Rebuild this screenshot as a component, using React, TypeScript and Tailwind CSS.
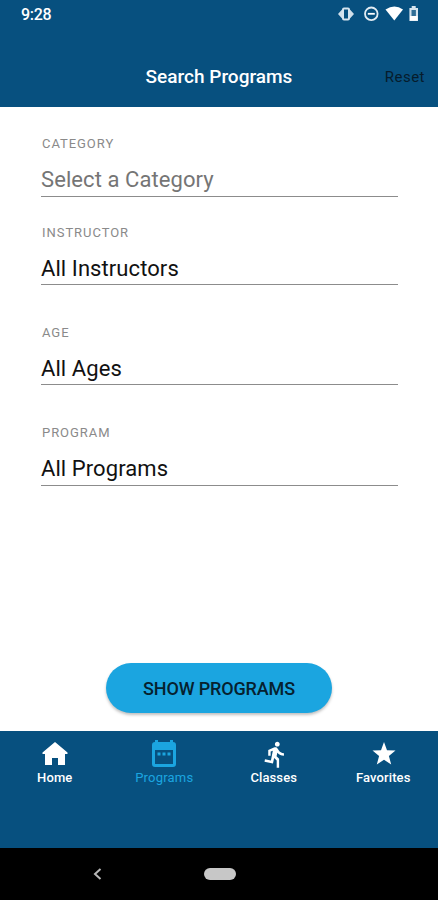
import type { ReactNode } from "react";
import { MdDirectionsRun } from "react-icons/md";

type FieldProps = { label: string; value: string; muted?: boolean; className: string };

function Field({ label, value, muted, className }: FieldProps) {
  return (
    <div className={`flex flex-col border-b border-[#8c8c8c] ${className}`}>
      <span className="pl-px text-[13px] leading-4 tracking-[0.95px] text-[#8a8a8a]">{label}</span>
      <span
        className={`mt-3 text-[22px] leading-8 tracking-[0.08px] whitespace-nowrap ${muted ? "text-[#757575]" : "text-[#111111]"}`}
      >
        {value}
      </span>
    </div>
  );
}

function Tab({ label, active, children }: { label: string; active?: boolean; children: ReactNode }) {
  return (
    <div className={`flex flex-1 flex-col items-center pt-[7px] ${active ? "text-[#1ba5e0]" : "text-white"}`}>
      <div className="flex h-8 items-center justify-center">{children}</div>
      <span className={`text-[13px] leading-4 ${active ? "tracking-[0.2px]" : "font-medium tracking-[0.1px]"}`}>
        {label}
      </span>
    </div>
  );
}

export default function App() {
  return (
    <div className="flex h-[900px] w-[438px] flex-col overflow-hidden bg-white font-[Roboto,sans-serif]">
      <header className="flex h-[107px] flex-col bg-[#07507f]">
        <div className="flex h-[30px] shrink-0 items-center justify-between pr-[18px] pl-[21px] text-white">
          <span className="text-[16px] leading-5 font-medium tracking-[-0.3px]">9:28</span>
          <svg className="mb-[2px]" width="82" height="18" viewBox="338 5 82 18" fill="none">
            <path d="M342.500 9 338 14l4.500 5zM349.500 9 354 14l-4.500 5z" fill="#d0dfea" />
            <rect x="343" y="8.500" width="6" height="11" rx="1" stroke="#d6e4ee" strokeWidth="2" />
            <circle cx="371.300" cy="13.800" r="6.300" stroke="#e2ecf3" strokeWidth="1.800" />
            <path d="M367.800 13.800h7" stroke="#fff" strokeWidth="1.800" />
            <path d="M385.500 9.500q9-6 17.500 0L394.300 20.500z" fill="#fff" />
            <path d="M411.700 6h4v2h2.300v13h-8.600V8h2.300z" fill="#d6e4ee" />
            <path d="M411.500 10h4.400v6h-4.400z" fill="#326f96" />
            <path d="M410 16h7.500v4.500H410z" fill="#fff" />
          </svg>
        </div>
        <div className="grid grow grid-cols-[1fr_auto_1fr] items-center px-[13px] pt-[17px] text-white">
          <span />
          <h1 className="text-[19px] leading-6 font-medium">Search Programs</h1>
          <span className="text-right text-[15px] leading-5 tracking-[0.5px] text-[#061c2c]">Reset</span>
        </div>
      </header>

      <main className="flex flex-1 flex-col pt-[29px] pr-10 pl-[41px]">
        <Field label="CATEGORY" value="Select a Category" muted className="h-[61px]" />
        <Field label="INSTRUCTOR" value="All Instructors" className="mt-7 h-[60px]" />
        <Field label="AGE" value="All Ages" className="mt-10 h-[60px]" />
        <Field label="PROGRAM" value="All Programs" className="mt-10 h-[61px]" />
        <button className="mt-[177px] mr-px h-[50px] w-[226px] self-center rounded-full bg-[#1ba5e0] text-[18px] font-medium tracking-[-0.15px] text-[#06212f] shadow-[0_2px_3px_rgba(0,0,0,0.25)]">
          SHOW PROGRAMS
        </button>
      </main>

      <nav className="flex h-[117px] bg-[#07507f]">
        <Tab label="Home">
          <svg width="26" height="24" viewBox="0 0 26 24" fill="currentColor">
            <path d="M13 0 .5 10.500V12H3v11h7v-7h6v7h7V12h2.500v-1.500z" />
          </svg>
        </Tab>
        <Tab label="Programs" active>
          <svg width="26" height="28" viewBox="0 0 26 28" fill="currentColor">
            <path
              fillRule="evenodd"
              d="M4 0h3v2h12V0h3v2a3 3 0 0 1 3 3v19a3 3 0 0 1-3 3H4a3 3 0 0 1-3-3V5a3 3 0 0 1 3-3zM4 10v14h18V10zM6.500 12.500h3v3h-3zM11.500 12.500h3v3h-3zM16.500 12.500h3v3h-3z"
            />
          </svg>
        </Tab>
        <Tab label="Classes">
          <MdDirectionsRun size={29} className="ml-[3px]" />
        </Tab>
        <Tab label="Favorites">
          <svg className="ml-px" width="24" height="24" viewBox="0 0 24 24" fill="currentColor">
            <path d="m12 0 3 8.300 8.500.3-6.600 5.300 2.300 8.600L12 17.700l-7.200 4.800 2.300-8.600L.5 8.600 9 8.300z" />
          </svg>
        </Tab>
      </nav>

      <footer className="flex h-[52px] items-center bg-black pl-[93px]">
        <svg width="9" height="12" viewBox="0 0 9 12" fill="none" stroke="#b8b8b8" strokeWidth="2">
          <path d="M7.500 1 2 6l5.500 5" />
        </svg>
        <div className="ml-[101.5px] h-3 w-8 rounded-full bg-[#c7c7c7]" />
      </footer>
    </div>
  );
}
